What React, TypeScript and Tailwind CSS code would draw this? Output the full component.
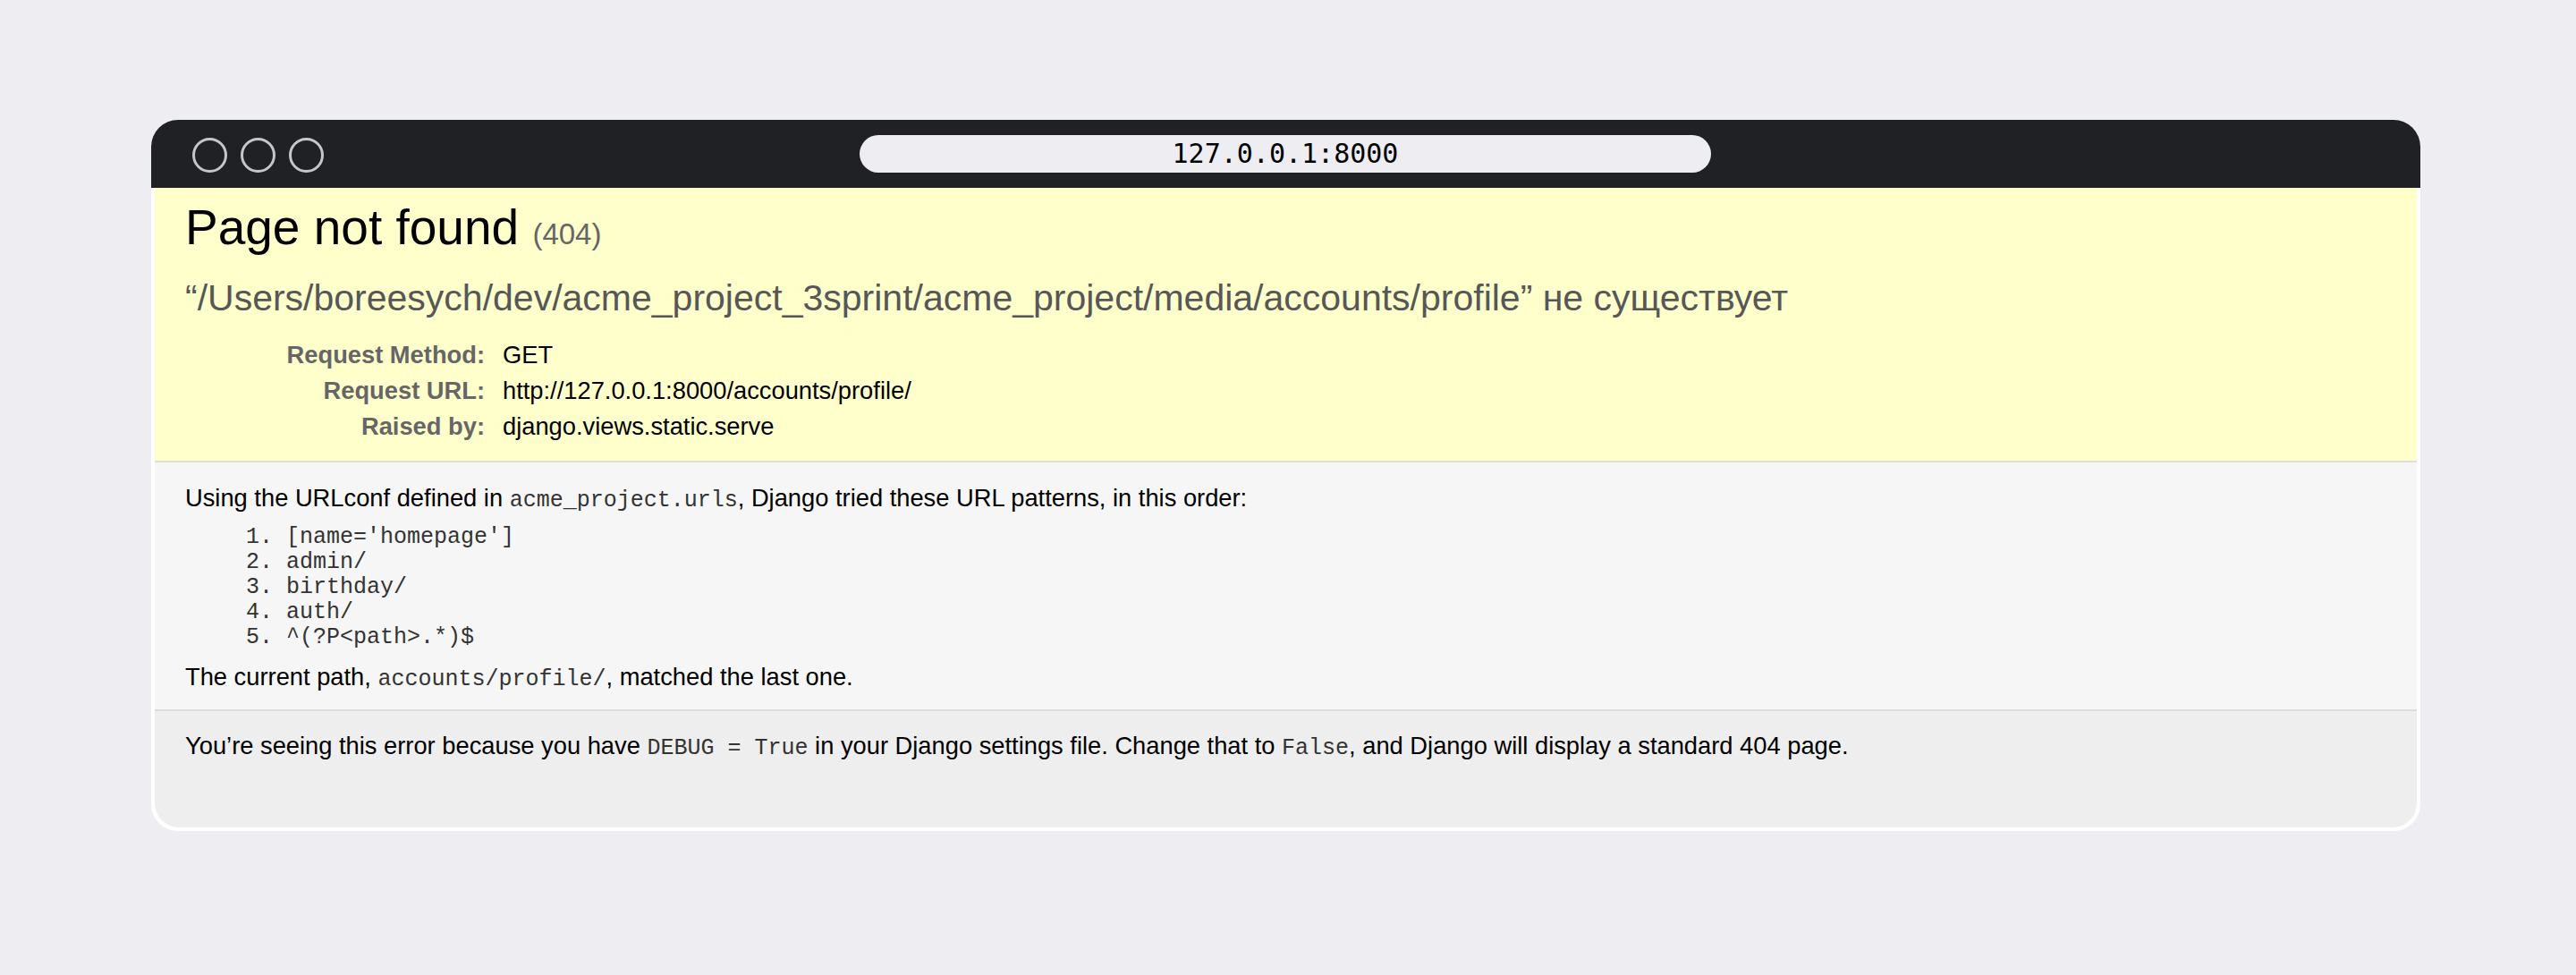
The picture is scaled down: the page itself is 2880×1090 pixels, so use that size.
import React from "react";

const sans = { fontFamily: '"Liberation Sans", Arial, Helvetica, sans-serif' };

function Code({ children }: { children: React.ReactNode }) {
  return (
    <code className="font-['Liberation_Mono',monospace] text-[25px] text-[#333]">{children}</code>
  );
}

export default function App() {
  const patterns = ["[name='homepage']", "admin/", "birthday/", "auth/", "^(?P<path>.*)$"];
  const rows: [string, string][] = [
    ["Request Method:", "GET"],
    ["Request URL:", "http://127.0.0.1:8000/accounts/profile/"],
    ["Raised by:", "django.views.static.serve"],
  ];
  return (
    <div className="min-h-screen w-full bg-[#eeedf2] pt-[134px] pl-[169px]" style={sans}>
      <div className="w-[2537px] h-[795px] rounded-[30px] overflow-hidden bg-white flex flex-col">
        {/* title bar */}
        <div className="h-[76px] bg-[#202124] flex items-center relative shrink-0">
          <div className="flex gap-[15px] pl-[46px] pt-[2px]">
            <div className="w-[39px] h-[39px] rounded-full border-[3px] border-[#c6c6c8]" />
            <div className="w-[39px] h-[39px] rounded-full border-[3px] border-[#c6c6c8]" />
            <div className="w-[39px] h-[39px] rounded-full border-[3px] border-[#c6c6c8]" />
          </div>
          <div className="absolute left-[792px] top-[17px] w-[952px] h-[42px] rounded-full bg-[#eeedf2] flex items-center justify-center">
            <span className="font-['DejaVu_Sans_Mono',monospace] text-[30px] leading-none text-black">127.0.0.1:8000</span>
          </div>
        </div>
        {/* content */}
        <div className="flex-1 flex flex-col px-[4px] pb-[4px]">
          <div className="bg-[#ffffcc] border-b-2 border-[#dddddd] pt-[16px] px-[34px] pb-[18px]">
            <h1 className="text-[55px] leading-[56px] text-black font-normal">
              Page not found <span className="text-[33px] text-[#666666]">(404)</span>
            </h1>
            <div className="mt-[19px] text-[41px] leading-[48px] text-[#575757] whitespace-nowrap">
              “/Users/boreesych/dev/acme_project_3sprint/acme_project/media/accounts/profile” не существует
            </div>
            <div className="mt-[20px] flex flex-col">
              {rows.map(([k, v]) => (
                <div key={k} className="flex h-[40px] items-center text-[27.3px] leading-[32px]">
                  <div className="w-[335px] text-right font-bold text-[#666666] shrink-0">{k}</div>
                  <div className="pl-[20px] text-black">{v}</div>
                </div>
              ))}
            </div>
          </div>
          <div className="bg-[#f6f6f6] border-b-2 border-[#dddddd] pt-[24px] px-[34px] pb-[17px] text-[27.3px] leading-[32px] text-black">
            <p>
              Using the URLconf defined in <Code>acme_project.urls</Code>, Django tried these URL patterns, in this order:
            </p>
            <ol className="list-decimal ml-[113px] mt-[11px] mb-[14px] font-['Liberation_Mono',monospace] text-[25px] leading-[28px] text-[#333]">
              {patterns.map((p) => (
                <li key={p}>{p}</li>
              ))}
            </ol>
            <p>
              The current path, <Code>accounts/profile/</Code>, matched the last one.
            </p>
          </div>
          <div className="flex-1 bg-[#eeeeee] pt-[23px] px-[34px] text-[27.3px] leading-[32px] text-black rounded-b-[27px]">
            <p>
              You’re seeing this error because you have <Code>DEBUG = True</Code> in your Django settings file. Change that to <Code>False</Code>, and Django will display a standard 404 page.
            </p>
          </div>
        </div>
      </div>
    </div>
  );
}
